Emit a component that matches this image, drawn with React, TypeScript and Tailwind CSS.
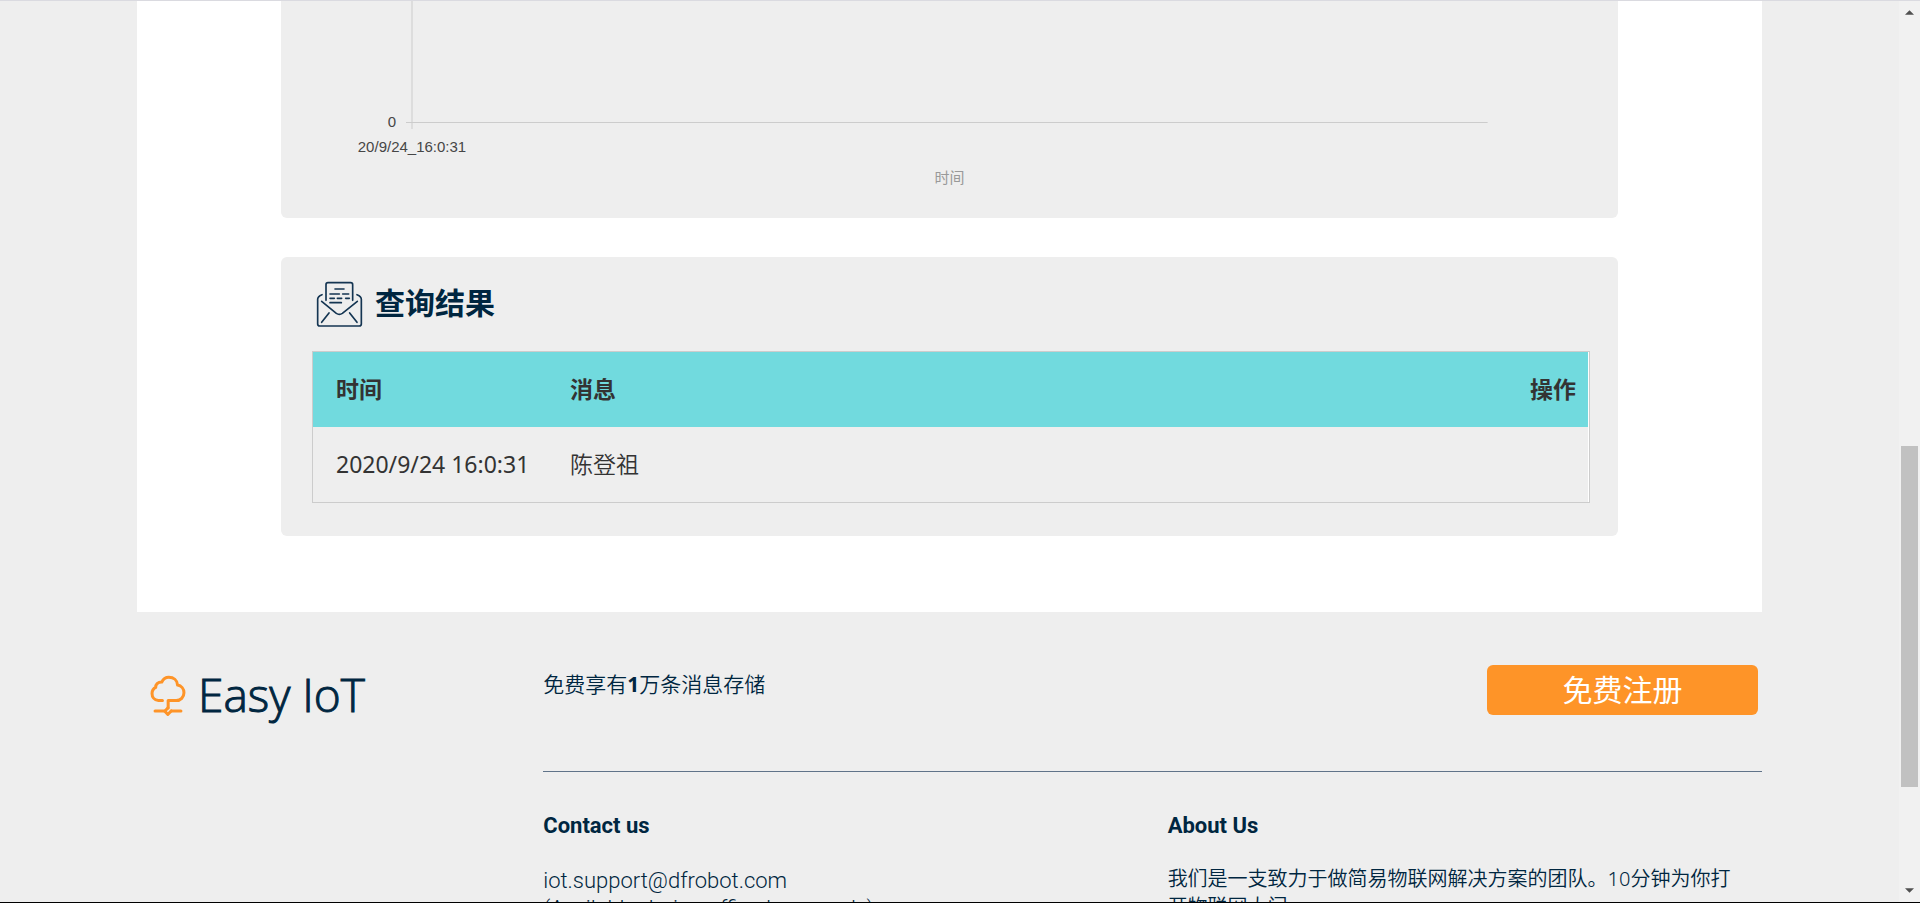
import { ReactNode } from 'react';

const rows = [{ time: '2020/9/24 16:0:31', message: '陈登祖' }];

const Panel = ({ className = '', children }: { className?: string; children: ReactNode }) => (
  <section className={`bg-[#eeeeee] ${className}`}>{children}</section>
);

const EnvelopeIcon = () => (
  <svg
    viewBox="18 18 141 141"
    className="h-[47px] w-[47px]"
    fill="none"
    stroke="#143552"
    strokeWidth="5"
    strokeLinecap="round"
    strokeLinejoin="round"
    aria-hidden="true"
  >
    <path d="M48 76V29q0-6 6-6h68q6 0 6 6v47" />
    <path d="M36 59q-13 5-13 14v74q0 6 6 6h119q6 0 6-6V73q0-9-13-14" />
    <path d="M35 79l44 36q9 6 18 0l45-36M57 114l-22 28M119 114l22 28" />
    <path d="M75 42h27M60 57h28M98 57h18M60 70h13M82 70h13M107 70h11M60 83h34" />
  </svg>
);

const CloudIcon = () => (
  <svg
    viewBox="14 14 110 122"
    className="h-[41px] w-[37px]"
    fill="none"
    stroke="#fe9428"
    strokeWidth="9"
    strokeLinecap="round"
    strokeLinejoin="round"
    aria-hidden="true"
  >
    <path d="M51 90H39C26 89 20 79 20 69c0-9 5-15 11-18-1-9 6-16 18-16 4-9 12-14 21-14 14 0 25 9 26 23 11 2 19 12 19 23 0 13-10 23-23 23H68v22" />
    <path d="M29 121h28M77 121h29" />
    <path d="M67 112l-9 10 9 9 10-10" />
  </svg>
);

const Chart = () => (
  <svg className="block h-[217px] w-full font-['Liberation_Sans','Noto_Sans_CJK_SC',sans-serif] text-[15px]">
    <rect x="130" y="0" width="2" height="128" fill="#dddddd" />
    <rect x="125" y="121" width="80.9%" height="1" fill="#cccccc" />
    <text x="115" y="126" textAnchor="end" fill="#464646">0</text>
    <text x="131" y="151" textAnchor="middle" fill="#464646">20/9/24_16:0:31</text>
    <text x="50%" y="182" textAnchor="middle" fill="#999999">时间</text>
  </svg>
);

const ResultTable = () => (
  <div className="border border-[#cccccc]">
    <table className="w-full border-r border-white text-[23px] leading-[33px] text-[#333333]">
      <thead>
        <tr className="h-[75px] bg-[#71dade] text-left">
          <th className="w-[234px] pl-[23px] font-bold">时间</th>
          <th className="pl-[23px] font-bold">消息</th>
          <th className="pr-3 text-right font-bold">操作</th>
        </tr>
      </thead>
      <tbody>
        {rows.map((row) => (
          <tr key={row.time} className="h-[75px]">
            <td className="whitespace-nowrap pl-[23px]">{row.time}</td>
            <td className="pl-[23px] font-[350]">{row.message}</td>
            <td />
          </tr>
        ))}
      </tbody>
    </table>
  </div>
);

const Footer = () => (
  <footer className="flex text-[#002640]">
    <div className="w-1/4 pl-[13px] pt-[63px]">
      <a href="#home" className="flex items-start gap-[11px]">
        <CloudIcon />
        <span className="font-['Open_Sans',sans-serif] text-[46px] leading-[38px] font-light [-webkit-text-stroke:1px_#002640]">
          Easy IoT
        </span>
      </a>
    </div>
    <div className="w-3/4">
      <div className="flex h-[160px] items-start justify-between border-b border-[#607389] pr-1 pt-[53px]">
        <p className="pt-1 text-[21px] leading-[30px] font-[350]">
          免费享有<strong className="font-bold">1</strong>万条消息存储
        </p>
        <button className="h-[50px] w-[271px] rounded-md bg-[#fe9428] text-[30px] leading-[48px] text-white">
          免费注册
        </button>
      </div>
      <div className="grid grid-cols-2 gap-[30px] pt-[38px] font-['Roboto','Noto_Sans_CJK_SC',sans-serif]">
        <div>
          <h3 className="text-[22px] leading-[32px] font-bold">Contact us</h3>
          <div className="pt-[25px] text-[22px] leading-[28px] font-light">
            <a href="mailto:iot.support@dfrobot.com">iot.support@dfrobot.com</a>
            <p>(Available during office hours only)</p>
          </div>
        </div>
        <div>
          <h3 className="text-[22px] leading-[32px] font-bold">About Us</h3>
          <p className="pr-4 pt-[23px] font-['Noto_Sans','Noto_Sans_CJK_SC',sans-serif] text-[20px] leading-[28px] font-[350]">
            我们是一支致力于做简易物联网解决方案的团队。10分钟为你打开物联网大门。
          </p>
        </div>
      </div>
    </div>
  </footer>
);

const ScrollRail = () => (
  <div className="flex w-[21px] shrink-0 flex-col items-center justify-between bg-[#f1f1f1] py-[9px]" aria-hidden="true">
    <svg viewBox="0 0 10 5" className="h-[5px] w-[9px]">
      <path d="M5 0L10 5H0z" fill="#505050" />
    </svg>
    <div className="flex w-full flex-1 flex-col items-center">
      <div className="grow-[431]" />
      <div className="w-[17px] grow-[341] bg-[#c1c1c1]" />
      <div className="grow-[101]" />
    </div>
    <svg viewBox="0 0 10 5" className="h-[5px] w-[9px]">
      <path d="M0 0h10L5 5z" fill="#505050" />
    </svg>
  </div>
);

const App = () => {
  return (
    <div className="flex h-screen overflow-hidden border-t border-b border-t-[#dadae0] border-b-black bg-[#eeeeee] font-['Noto_Sans','Noto_Sans_CJK_SC',sans-serif]">
      <div className="min-w-0 flex-1 overflow-hidden">
        <div className="mx-auto max-w-[1625px]">
          <main className="bg-white px-36 pb-[76px]">
            <Panel className="rounded-b-md">
              <Chart />
            </Panel>
            <Panel className="mt-[39px] rounded-md pb-[33px] pl-[31px] pr-[28px] pt-6">
              <div className="flex items-start gap-3 pb-[23px] pl-1">
                <EnvelopeIcon />
                <h2 className="text-[30px] leading-[44px] font-bold text-[#002640]">查询结果</h2>
              </div>
              <ResultTable />
            </Panel>
          </main>
          <Footer />
        </div>
      </div>
      <ScrollRail />
    </div>
  );
};

export default App;
